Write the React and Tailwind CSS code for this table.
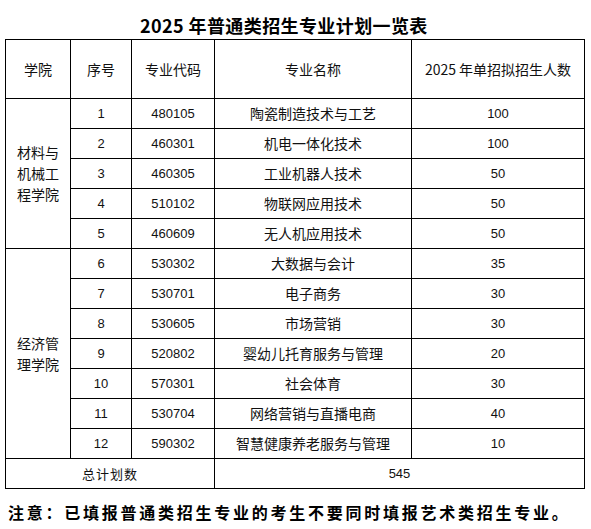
import React from "react";

const rows = [
  ["1", "480105", "陶瓷制造技术与工艺", "100"],
  ["2", "460301", "机电一体化技术", "100"],
  ["3", "460305", "工业机器人技术", "50"],
  ["4", "510102", "物联网应用技术", "50"],
  ["5", "460609", "无人机应用技术", "50"],
  ["6", "530302", "大数据与会计", "35"],
  ["7", "530701", "电子商务", "30"],
  ["8", "530605", "市场营销", "30"],
  ["9", "520802", "婴幼儿托育服务与管理", "20"],
  ["10", "570301", "社会体育", "30"],
  ["11", "530704", "网络营销与直播电商", "40"],
  ["12", "590302", "智慧健康养老服务与管理", "10"],
];

const cell = "border border-black text-center p-0";
const num = "font-['Liberation_Sans',sans-serif] text-[13px]";

const App = () => {
  return (
    <div className="w-[591px] h-[529px] bg-white text-[#111] font-['Noto_Sans_CJK_SC',sans-serif]">
      <h1 className="h-[39px] pt-[12px] pl-[140px] text-[18px] leading-[26px] font-bold tracking-[0.4px] text-black">
        2025 年普通类招生专业计划一览表
      </h1>
      <table className="ml-[5px] border-collapse table-fixed w-[579px] text-[14px]">
        <colgroup>
          <col className="w-[65px]" />
          <col className="w-[61px]" />
          <col className="w-[83px]" />
          <col className="w-[197px]" />
          <col className="w-[173px]" />
        </colgroup>
        <thead>
          <tr className="h-[59px]">
            <th className={`${cell} font-normal`}>学院</th>
            <th className={`${cell} font-normal`}>序号</th>
            <th className={`${cell} font-normal`}>专业代码</th>
            <th className={`${cell} font-normal`}>专业名称</th>
            <th className={`${cell} font-normal`}>2025 年单招拟招生人数</th>
          </tr>
        </thead>
        <tbody>
          {rows.map((r, i) => (
            <tr key={r[0]} className="h-[30px]">
              {i === 0 && (
                <td rowSpan={5} className={`${cell} leading-[21px]`}>
                  材料与
                  <br />
                  机械工
                  <br />
                  程学院
                </td>
              )}
              {i === 5 && (
                <td rowSpan={7} className={`${cell} leading-[21px]`}>
                  经济管
                  <br />
                  理学院
                </td>
              )}
              <td className={`${cell} ${num}`}>{r[0]}</td>
              <td className={`${cell} ${num}`}>{r[1]}</td>
              <td className={cell}>{r[2]}</td>
              <td className={`${cell} ${num}`}>{r[3]}</td>
            </tr>
          ))}
          <tr className="h-[30px]">
            <td colSpan={3} className={`${cell} text-[13px] tracking-[1px]`}>
              总计划数
            </td>
            <td colSpan={2} className={`${cell} ${num}`}>
              545
            </td>
          </tr>
        </tbody>
      </table>
      <p className="mt-[12px] pl-[8px] text-[16px] leading-[22px] font-bold tracking-[2.75px] text-black">
        注意：已填报普通类招生专业的考生不要同时填报艺术类招生专业。
      </p>
    </div>
  );
};

export default App;
